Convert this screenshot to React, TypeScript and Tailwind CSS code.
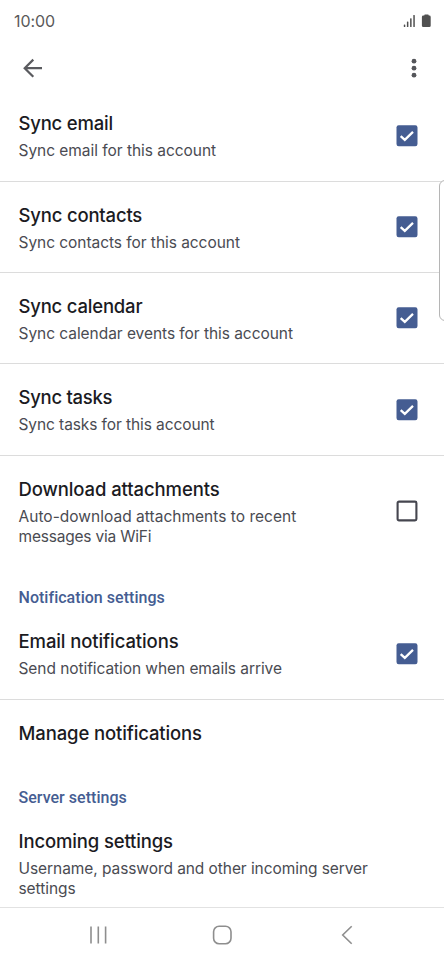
import clsx from "clsx";

interface RowProps {
  title: string;
  summary?: string[];
  checked?: boolean;
  className?: string;
  titleClass?: string;
  summaryClass?: string;
}

const Checkbox = ({ checked }: { checked: boolean }) => (
  <svg width="22" height="22" viewBox="0 0 22 22" role="checkbox" aria-checked={checked}>
    {checked ? (
      <>
        <rect x="0.5" y="0.3" width="21" height="21" rx="2.2" fill="#455d92" />
        <path d="M4.700 11.100L8.800 14.900L17 6.900" fill="none" stroke="#fff" strokeWidth="2.3" />
      </>
    ) : (
      <rect x="1.6" y="1.6" width="18.800" height="18.800" rx="1.4" fill="none" stroke="#45464f" strokeWidth="2.1" />
    )}
  </svg>
);

const Row = ({ title, summary = [], checked, className, titleClass, summaryClass }: RowProps) => (
  <li className={clsx("flex shrink-0 items-center justify-between pl-[18.5px] pr-[26px]", className)}>
    <div className="whitespace-nowrap">
      <p className={clsx("text-[18.5px] leading-6 font-medium text-[#1b1b1f]", titleClass)}>{title}</p>
      {summary.length > 0 && (
        <div className={clsx("mt-[6px] -mb-px text-[15.5px] leading-5 text-[#4a4b52]", summaryClass)}>
          {summary.map((line) => (
            <p key={line}>{line}</p>
          ))}
        </div>
      )}
    </div>
    {checked !== undefined && <Checkbox checked={checked} />}
  </li>
);

const Heading = ({ text, className }: { text: string; className?: string }) => (
  <li
    className={clsx(
      "flex shrink-0 items-end pl-[18.5px] font-[Roboto,sans-serif] text-[16px] leading-5 font-medium tracking-[0.03px] text-[#455d92]",
      className
    )}
  >
    {text}
  </li>
);

export default function App() {
  return (
    <div className="relative flex h-[962px] w-[444px] flex-col overflow-hidden bg-white font-[Inter,sans-serif]">
      <header className="h-[90px] shrink-0">
        <div className="flex h-[42px] items-center justify-between pl-[14px] pr-3">
          <span className="text-[16px] tracking-[-0.1px] text-[#5a5a5a]">10:00</span>
          <div className="flex items-center gap-[5px]">
            <svg width="13" height="14" viewBox="0 0 13 14" fill="#505050">
              <rect x="0.8" y="10.5" width="1.5" height="2.5" rx="0.6" />
              <rect x="3.9" y="7.4" width="1.5" height="5.600" rx="0.6" />
              <rect x="7.100" y="4.200" width="1.5" height="8.800" rx="0.6" />
              <rect x="10.300" y="1" width="1.5" height="12" rx="0.6" />
            </svg>
            <svg width="11" height="14" viewBox="0 0 11 14" fill="#505050">
              <path d="M3.200 1.600L3.700.4h3.600l.5 1.200h.5a1.400 1.400 0 0 1 1.400 1.400v8.700a1.400 1.400 0 0 1-1.400 1.400H2.300A1.400 1.400 0 0 1 .9 11.700V3a1.400 1.400 0 0 1 1.400-1.400z" />
            </svg>
          </div>
        </div>
        <div className="flex h-[52px] items-center justify-between pl-[22px] pr-[26px]">
          <svg width="22" height="22" viewBox="0 0 22 22" fill="none" stroke="#5a5b5f" strokeWidth="2.2">
            <path d="M20 11.200H3M11.300 2.600L2.700 11.200l8.600 8.600" />
          </svg>
          <svg width="8" height="22" viewBox="0 0 8 22" fill="#55565a">
            <circle cx="4" cy="4.200" r="2.400" />
            <circle cx="4" cy="11.200" r="2.400" />
            <circle cx="4" cy="18.200" r="2.400" />
          </svg>
        </div>
      </header>

      <ul className="flex h-[817px] shrink-0 flex-col overflow-hidden">
        <Row
          title="Sync email"
          summary={["Sync email for this account"]}
          checked
          className="h-[92px] border-b border-[#dcdcdc]"
          titleClass="tracking-[-0.2px]"
          summaryClass="tracking-[-0.04px]"
        />
        <Row
          title="Sync contacts"
          summary={["Sync contacts for this account"]}
          checked
          className="h-[91px] border-b border-[#dcdcdc]"
          titleClass="tracking-[-0.18px]"
          summaryClass="tracking-[-0.05px]"
        />
        <Row
          title="Sync calendar"
          summary={["Sync calendar events for this account"]}
          checked
          className="h-[91px] border-b border-[#dcdcdc]"
          titleClass="tracking-[-0.2px]"
          summaryClass="tracking-[-0.05px]"
        />
        <Row
          title="Sync tasks"
          summary={["Sync tasks for this account"]}
          checked
          className="h-[92px] border-b border-[#dcdcdc]"
          titleClass="tracking-[-0.27px]"
          summaryClass="tracking-[-0.09px]"
        />
        <Row
          title="Download attachments"
          summary={["Auto-download attachments to recent", "messages via WiFi"]}
          checked={false}
          className="h-[110px]"
          titleClass="tracking-[-0.1px]"
          summaryClass="tracking-[0.02px] [&>p:last-child]:tracking-[-0.2px]"
        />
        <Heading text="Notification settings" className="h-[42px]" />
        <Row
          title="Email notifications"
          summary={["Send notification when emails arrive"]}
          checked
          className="h-[92px] border-b border-[#dcdcdc]"
          titleClass="tracking-[-0.1px]"
          summaryClass="tracking-[-0.07px]"
        />
        <Row title="Manage notifications" className="h-[66px]" titleClass="tracking-[-0.12px]" />
        <Heading text="Server settings" className="h-[42px]" />
        <Row
          title="Incoming settings"
          summary={["Username, password and other incoming server", "settings"]}
          className="h-[111px]"
          titleClass="tracking-[-0.14px]"
          summaryClass="tracking-[-0.07px]"
        />
      </ul>

      <nav className="flex flex-1 items-start border-t border-[#e2e2e2] pt-[17px] pl-[88px]">
        <svg width="20" height="20" viewBox="0 0 20 20" stroke="#8e8e8e" strokeWidth="1.6">
          <path d="M3 1.500V18.500M10.300 1.500V18.500M17.600 1.500V18.500" />
        </svg>
        <svg className="ml-[104px]" width="20" height="20" viewBox="0 0 20 20" fill="none" stroke="#8e8e8e" strokeWidth="1.6">
          <rect x="1.600" y="1.300" width="17.400" height="17.400" rx="5.500" />
        </svg>
        <svg className="ml-[109px]" width="12" height="20" viewBox="0 0 12 20" fill="none" stroke="#8e8e8e" strokeWidth="1.6">
          <path d="M10.700 1.200L1.700 10l9 8.800" />
        </svg>
      </nav>

      {/* edge panel handle */}
      <div className="absolute top-[180px] -right-[8px] h-[141px] w-[13px] rounded-md border border-[#b5b5b5] bg-white" />
    </div>
  );
}
